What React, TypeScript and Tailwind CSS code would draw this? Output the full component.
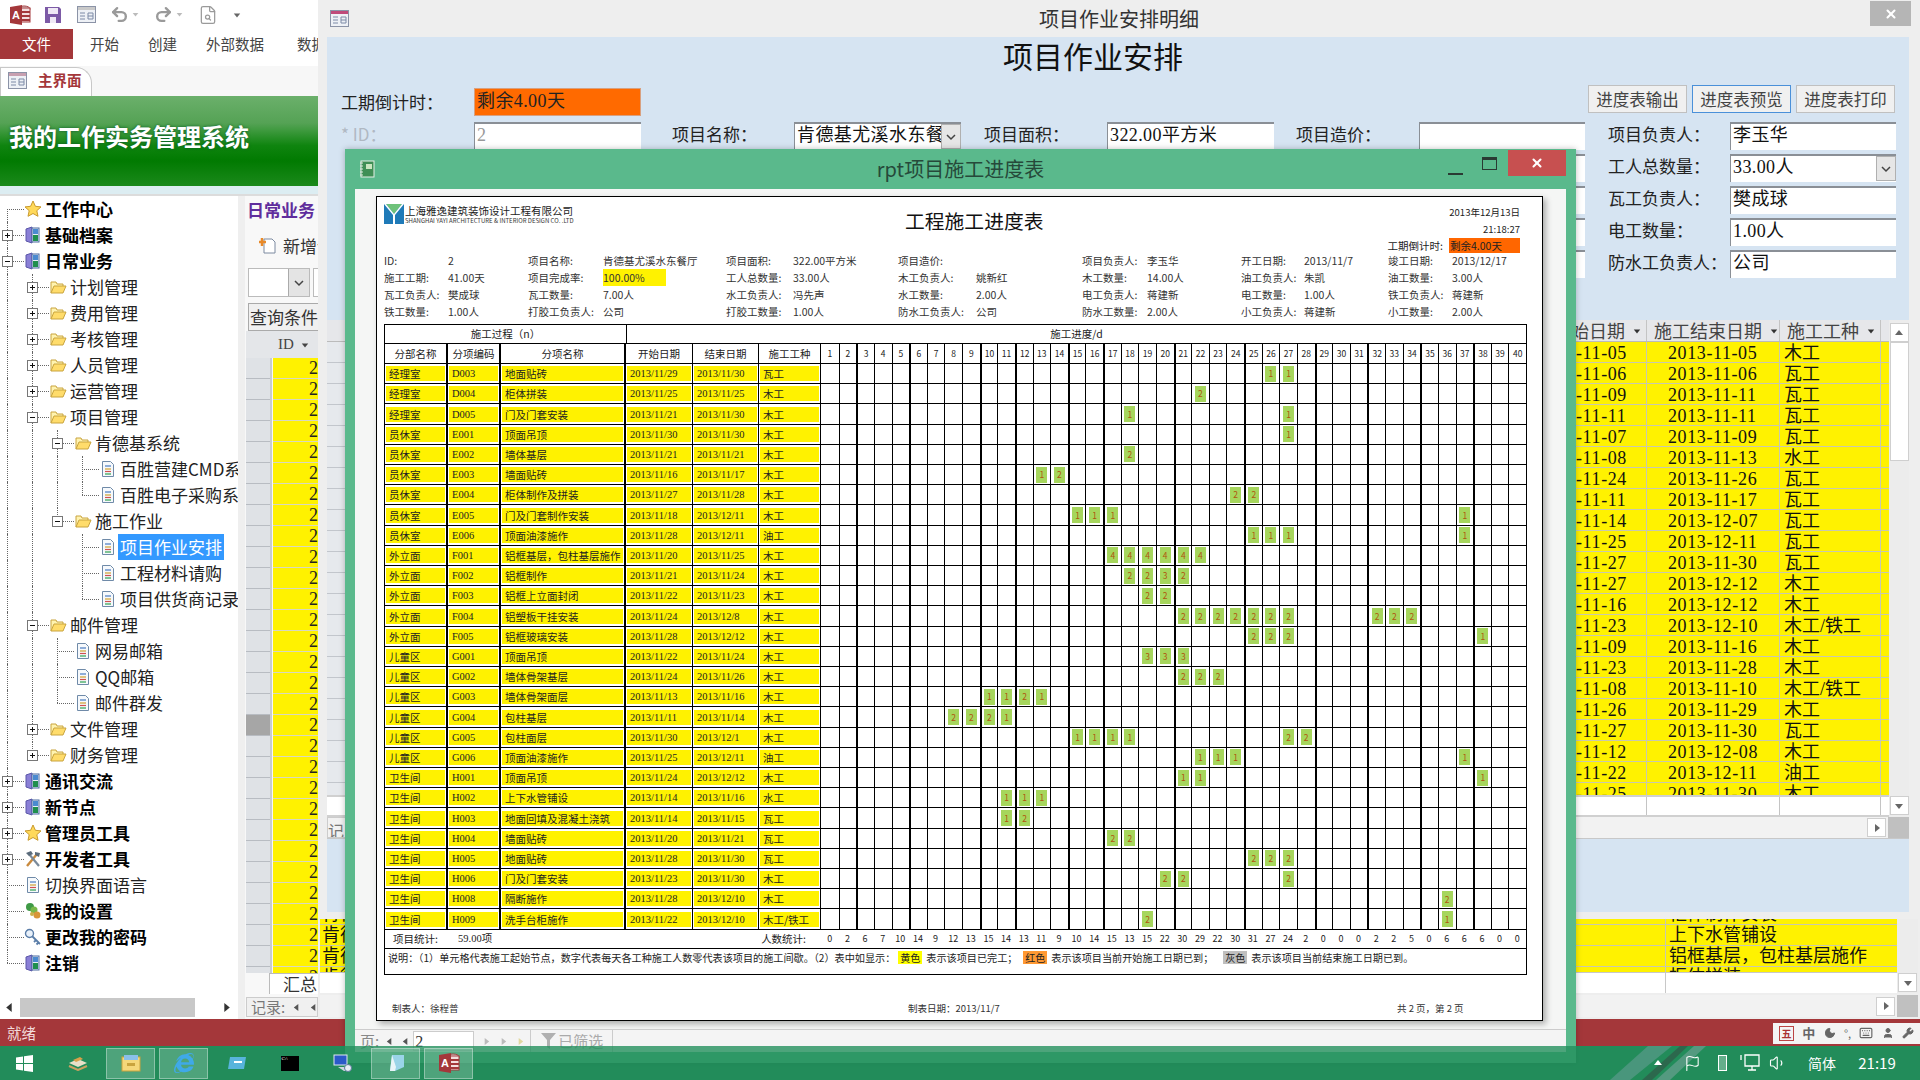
import React from 'react';
import { FileSearch, Flag, Keyboard, Moon, Redo2, Undo2, User, Volume1, Wrench, X } from 'lucide-react';
import { FaInternetExplorer } from 'react-icons/fa';

const SIM = "font-['Liberation_Serif','Noto_Sans_CJK_SC',serif]";
const YELLOW = 'bg-[#fff200]';

type TreeRow = [number, string, string, string, boolean?];

const treeRows: TreeRow[] = [
  [0, '工作中心', 'star', '', true],
  [0, '基础档案', 'book', '+', true],
  [0, '日常业务', 'book', '-', true],
  [1, '计划管理', 'folder', '+'],
  [1, '费用管理', 'folder', '+'],
  [1, '考核管理', 'folder', '+'],
  [1, '人员管理', 'folder', '+'],
  [1, '运营管理', 'folder', '+'],
  [1, '项目管理', 'folder', '-'],
  [2, '肯德基系统', 'folder', '-'],
  [3, '百胜营建CMD系统', 'doc', ''],
  [3, '百胜电子采购系统', 'doc', ''],
  [2, '施工作业', 'folder', '-'],
  [3, '项目作业安排', 'doc', ''],
  [3, '工程材料请购', 'doc', ''],
  [3, '项目供货商记录', 'doc', ''],
  [1, '邮件管理', 'folder', '-'],
  [2, '网易邮箱', 'doc', ''],
  [2, 'QQ邮箱', 'doc', ''],
  [2, '邮件群发', 'doc', ''],
  [1, '文件管理', 'folder', '+'],
  [1, '财务管理', 'folder', '+'],
  [0, '通讯交流', 'book', '+', true],
  [0, '新节点', 'book', '+', true],
  [0, '管理员工具', 'star', '+', true],
  [0, '开发者工具', 'tools', '+', true],
  [0, '切换界面语言', 'doc', ''],
  [0, '我的设置', 'gear', '', true],
  [0, '更改我的密码', 'key', '', true],
  [0, '注销', 'book', '', true],
];

function hasNext(i: number) {
  const lvl = treeRows[i][0];
  for (let j = i + 1; j < treeRows.length; j++) {
    if (treeRows[j][0] < lvl) return false;
    if (treeRows[j][0] === lvl) return true;
  }
  return false;
}

const scheduleRows: [string, string, string, string, string, string, Record<number, number>][] = [
  ['经理室', 'D003', '地面贴砖', '2013/11/29', '2013/11/30', '瓦工', { 26: 1, 27: 1 }],
  ['经理室', 'D004', '柜体拼装', '2013/11/25', '2013/11/25', '木工', { 22: 2 }],
  ['经理室', 'D005', '门及门套安装', '2013/11/21', '2013/11/30', '木工', { 18: 1, 27: 1 }],
  ['员休室', 'E001', '顶面吊顶', '2013/11/30', '2013/11/30', '木工', { 27: 1 }],
  ['员休室', 'E002', '墙体基层', '2013/11/21', '2013/11/21', '木工', { 18: 2 }],
  ['员休室', 'E003', '墙面贴砖', '2013/11/16', '2013/11/17', '木工', { 13: 1, 14: 2 }],
  ['员休室', 'E004', '柜体制作及拼装', '2013/11/27', '2013/11/28', '木工', { 24: 2, 25: 2 }],
  ['员休室', 'E005', '门及门套制作安装', '2013/11/18', '2013/12/11', '木工', { 15: 1, 16: 1, 17: 1, 37: 1 }],
  ['员休室', 'E006', '顶面油漆施作', '2013/11/28', '2013/12/11', '油工', { 25: 1, 26: 1, 27: 1, 37: 1 }],
  ['外立面', 'F001', '铝框基层，包柱基层施作', '2013/11/20', '2013/11/25', '木工', { 17: 4, 18: 4, 19: 4, 20: 4, 21: 4, 22: 4 }],
  ['外立面', 'F002', '铝框制作', '2013/11/21', '2013/11/24', '木工', { 18: 2, 19: 2, 20: 3, 21: 2 }],
  ['外立面', 'F003', '铝框上立面封闭', '2013/11/22', '2013/11/23', '木工', { 19: 2, 20: 2 }],
  ['外立面', 'F004', '铝塑板干挂安装', '2013/11/24', '2013/12/8', '木工', { 21: 2, 22: 2, 23: 2, 24: 2, 25: 2, 26: 2, 27: 2, 32: 2, 33: 2, 34: 2 }],
  ['外立面', 'F005', '铝框玻璃安装', '2013/11/28', '2013/12/12', '木工', { 25: 2, 26: 2, 27: 2, 38: 1 }],
  ['儿童区', 'G001', '顶面吊顶', '2013/11/22', '2013/11/24', '木工', { 19: 3, 20: 3, 21: 3 }],
  ['儿童区', 'G002', '墙体骨架基层', '2013/11/24', '2013/11/26', '木工', { 21: 2, 22: 2, 23: 2 }],
  ['儿童区', 'G003', '墙体骨架面层', '2013/11/13', '2013/11/16', '木工', { 10: 1, 11: 1, 12: 2, 13: 1 }],
  ['儿童区', 'G004', '包柱基层', '2013/11/11', '2013/11/14', '木工', { 8: 2, 9: 2, 10: 2, 11: 1 }],
  ['儿童区', 'G005', '包柱面层', '2013/11/30', '2013/12/1', '木工', { 15: 1, 16: 1, 17: 1, 18: 1, 27: 2, 28: 2 }],
  ['儿童区', 'G006', '顶面油漆施作', '2013/11/25', '2013/12/11', '油工', { 22: 1, 23: 1, 24: 1, 37: 1 }],
  ['卫生间', 'H001', '顶面吊顶', '2013/11/24', '2013/12/12', '木工', { 21: 1, 22: 1, 38: 1 }],
  ['卫生间', 'H002', '上下水管铺设', '2013/11/14', '2013/11/16', '水工', { 11: 1, 12: 1, 13: 1 }],
  ['卫生间', 'H003', '地面回填及混凝土浇筑', '2013/11/14', '2013/11/15', '瓦工', { 11: 1, 12: 2 }],
  ['卫生间', 'H004', '墙面贴砖', '2013/11/20', '2013/11/21', '瓦工', { 17: 2, 18: 2 }],
  ['卫生间', 'H005', '地面贴砖', '2013/11/28', '2013/11/30', '瓦工', { 25: 2, 26: 2, 27: 2 }],
  ['卫生间', 'H006', '门及门套安装', '2013/11/23', '2013/11/30', '木工', { 20: 2, 21: 2, 27: 2 }],
  ['卫生间', 'H008', '隔断施作', '2013/11/28', '2013/12/10', '木工', { 36: 2 }],
  ['卫生间', 'H009', '洗手台柜施作', '2013/11/22', '2013/12/10', '木工/铁工', { 19: 2, 36: 1 }],
];

const dayTotals = [0, 2, 6, 7, 10, 14, 9, 12, 13, 15, 14, 13, 11, 9, 10, 14, 15, 13, 15, 22, 30, 29, 22, 30, 31, 27, 24, 2, 0, 0, 0, 2, 2, 5, 0, 6, 6, 6, 0, 0];
const days = Array.from({ length: 40 }, (_, i) => i + 1);
const thickLines = [3, 6, 10, 12, 15, 17, 21, 25, 29, 32, 35, 38];

const infoRows = [
  ['ID:', '2', '项目名称:', '肯德基尤溪水东餐厅', '项目面积:', '322.00平方米', '项目造价:', '', '项目负责人:', '李玉华', '开工日期:', '2013/11/7', '竣工日期:', '2013/12/17'],
  ['施工工期:', '41.00天', '项目完成率:', '100.00%', '工人总数量:', '33.00人', '木工负责人:', '姚新红', '木工数量:', '14.00人', '油工负责人:', '朱凯', '油工数量:', '3.00人'],
  ['瓦工负责人:', '樊成球', '瓦工数量:', '7.00人', '水工负责人:', '冯先声', '水工数量:', '2.00人', '电工负责人:', '蒋建新', '电工数量:', '1.00人', '铁工负责人:', '蒋建新'],
  ['铁工数量:', '1.00人', '打胶工负责人:', '公司', '打胶工数量:', '1.00人', '防水工负责人:', '公司', '防水工数量:', '2.00人', '小工负责人:', '蒋建新', '小工数量:', '2.00人'],
];

const gridRows = [
  ['11-05', '2013-11-05', '木工'], ['11-06', '2013-11-06', '瓦工'], ['11-09', '2013-11-11', '瓦工'], ['11-11', '2013-11-11', '瓦工'],
  ['11-07', '2013-11-09', '瓦工'], ['11-08', '2013-11-13', '水工'], ['11-24', '2013-11-26', '瓦工'], ['11-11', '2013-11-17', '瓦工'],
  ['11-14', '2013-12-07', '瓦工'], ['11-25', '2013-12-11', '瓦工'], ['11-27', '2013-11-30', '瓦工'], ['11-27', '2013-12-12', '木工'],
  ['11-16', '2013-12-12', '木工'], ['11-23', '2013-12-10', '木工/铁工'], ['11-09', '2013-11-16', '木工'], ['11-23', '2013-11-28', '木工'],
  ['11-08', '2013-11-10', '木工/铁工'], ['11-26', '2013-11-29', '木工'], ['11-27', '2013-11-30', '瓦工'], ['11-12', '2013-12-08', '木工'],
  ['11-22', '2013-12-11', '油工'], ['11-25', '2013-11-30', '木工'],
];

function AccessLogo({ size = 22 }: { size?: number }) {
  return (
    <svg width={size} height={size} viewBox="0 0 22 22" className="shrink-0">
      <ellipse cx="15" cy="5" rx="6" ry="3" fill="#d9d9d9" stroke="#a4373a" />
      <rect x="9" y="4" width="12" height="14" fill="#f3dede" stroke="#a4373a" />
      <path d="M10 8h11M10 12h11M10 16h11" stroke="#a4373a" strokeWidth="2" />
      <path d="M1 3l12-2v20l-12-2z" fill="#a4373a" />
      <text x="3" y="15" fontSize="11" fontWeight="700" fill="#fff" fontFamily="Liberation Sans">A</text>
    </svg>
  );
}

function FormIcon({ top = '#c8a0b0' }: { top?: string }) {
  return (
    <svg width="19" height="19" viewBox="0 0 19 19" className="shrink-0">
      <rect x="0.5" y="1.5" width="18" height="16" fill="#eef1f6" stroke="#8b93a7" />
      <rect x="1" y="2" width="17" height="3" fill={top} />
      <path d="M3 8h5M3 11h5M3 14h5M11 8h5v6h-5zM11 11h5" stroke="#7d8aa6" fill="none" />
    </svg>
  );
}

function TreeIcon({ type }: { type: string }) {
  if (type === 'star') {
    return (
      <svg width="18" height="18" viewBox="0 0 18 18">
        <path d="M9 1l2.4 5.3 5.6.6-4.2 3.8 1.2 5.6L9 13.5l-5 2.8 1.2-5.6L1 6.9l5.6-.6z" fill="#ffd95a" stroke="#c99a2e" />
      </svg>
    );
  }
  if (type === 'book') {
    return (
      <svg width="18" height="18" viewBox="0 0 18 18">
        <path d="M2 3l6-2v16l-6-2z" fill="#8a7fd6" stroke="#5a56a8" />
        <rect x="8" y="2" width="7" height="14" fill="#e6edf5" stroke="#4a6aa0" />
        <rect x="9" y="9" width="5" height="6" fill="#1f8f4e" />
        <rect x="9" y="3" width="5" height="5" fill="#4a8ad0" />
      </svg>
    );
  }
  if (type === 'folder') {
    return (
      <svg width="18" height="18" viewBox="0 0 18 18">
        <path d="M2 15V4h5l1 2h6v2" fill="#fff3b0" stroke="#c9a43e" />
        <path d="M2 15l3-7h12l-3 7z" fill="#ffdc6b" stroke="#c9a43e" />
      </svg>
    );
  }
  if (type === 'doc') {
    return (
      <svg width="18" height="18" viewBox="0 0 18 18">
        <path d="M3.5 1.5h8l3 3v12h-11z" fill="#f6f9fc" stroke="#6f8aa8" />
        <path d="M6 6h6" stroke="#4a7ac0" strokeWidth="1.2" />
        <path d="M6 9h6" stroke="#d0a030" strokeWidth="1.2" />
        <path d="M6 11.5h6" stroke="#d05050" strokeWidth="1.2" />
        <path d="M6 14h6" stroke="#30a050" strokeWidth="1.2" />
      </svg>
    );
  }
  if (type === 'tools') {
    return (
      <svg width="18" height="18" viewBox="0 0 18 18">
        <path d="M3 16L13 4" stroke="#c98a3e" strokeWidth="2.4" />
        <path d="M15 16L5 4" stroke="#7a8a9a" strokeWidth="2.2" />
        <path d="M2 3l5-2 2 3-4 2zM11 2l5 1-1 4-4-2z" fill="#5b6b7b" />
      </svg>
    );
  }
  if (type === 'gear') {
    return (
      <svg width="18" height="18" viewBox="0 0 18 18">
        <circle cx="6" cy="5" r="4" fill="#3f9a46" />
        <circle cx="10" cy="8" r="3.5" fill="#79b84a" />
        <circle cx="13" cy="13" r="3.5" fill="#d8963a" />
        <circle cx="8" cy="12" r="2" fill="#c9b04a" />
      </svg>
    );
  }
  return (
    <svg width="18" height="18" viewBox="0 0 18 18">
      <circle cx="5.5" cy="5.5" r="4" fill="#e9f1fa" stroke="#5a7da8" strokeWidth="1.4" />
      <path d="M8 8l8 8M12 12l-2 2M14.500 14.500l-2 2" stroke="#5a7da8" strokeWidth="1.8" />
    </svg>
  );
}

function Expander({ sign }: { sign: string }) {
  return (
    <svg width="11" height="11" viewBox="0 0 11 11" className="absolute left-[2px] top-[8px]">
      <rect x="0.500" y="0.500" width="10" height="10" fill="#fff" stroke="#777" />
      <path d={sign === '+' ? 'M3 5.500h5M5.500 3v5' : 'M3 5.500h5'} stroke="#111" />
    </svg>
  );
}

function Tree() {
  const active: boolean[] = [];
  return (
    <div className="text-[17px] text-[#222]">
      {treeRows.map((row, i) => {
        const [lvl, label, icon, exp, bold] = row;
        const more = hasNext(i);
        active[lvl] = more;
        const guides = active.slice(0, lvl);
        return (
          <div key={label} className="flex h-[26px] items-center whitespace-nowrap">
            {guides.map((g, k) => (
              <div key={k} className="relative h-full w-[25px] shrink-0">
                {g && <div className="absolute inset-y-0 left-[7px] border-l border-dotted border-[#666]" />}
              </div>
            ))}
            <div className="relative h-full w-[24px] shrink-0">
              <div className={`absolute left-[7px] border-l border-dotted border-[#666] ${i === 0 ? 'top-1/2' : 'top-0'} ${more ? 'bottom-0' : 'bottom-1/2'}`} />
              <div className="absolute left-[7px] right-0 top-1/2 border-t border-dotted border-[#666]" />
              {exp && <Expander sign={exp} />}
            </div>
            <div className="w-[18px] shrink-0">
              <TreeIcon type={icon} />
            </div>
            <span className={`ml-[1px] px-[2px] leading-[26px] ${bold ? 'font-bold text-black' : ''} ${label === '项目作业安排' ? 'bg-[#3399ff] text-white' : ''}`}>
              {label}
            </span>
          </div>
        );
      })}
    </div>
  );
}

function Tri({ dir, className = '' }: { dir: 'l' | 'r' | 'u' | 'd'; className?: string }) {
  const d = { l: 'M7 1v8L2 5z', r: 'M3 1v8l5-4z', u: 'M1 7h8L5 2z', d: 'M1 3h8L5 8z' }[dir];
  return (
    <svg width="10" height="10" viewBox="0 0 10 10" className={`shrink-0 ${className}`}>
      <path d={d} fill="currentColor" />
    </svg>
  );
}

function Chevron() {
  return (
    <svg width="10" height="10" viewBox="0 0 10 10">
      <path d="M1 3l4 4 4-4" fill="none" stroke="currentColor" strokeWidth="1.500" />
    </svg>
  );
}

function LeftPane() {
  const rows = Array.from({ length: 30 }, (_, i) => i);
  return (
    <div className="flex w-[318px] shrink-0 flex-col bg-white">
      <div className="flex h-[29px] items-center pl-[9px] text-[#9a9a9a]">
        <AccessLogo />
        <svg width="18" height="18" viewBox="0 0 18 18" className="ml-[13px]">
          <path d="M1 1h14l2 2v14H1z" fill="#7c5aa6" />
          <rect x="4" y="2" width="10" height="6" fill="#efe9f5" />
          <rect x="6" y="11" width="6" height="6" fill="#efe9f5" />
        </svg>
        <div className="ml-[15px]"><FormIcon top="#c9c9c9" /></div>
        <Undo2 className="ml-[14px] h-[19px] w-[19px]" strokeWidth={3} />
        <Tri dir="d" className="ml-[3px] h-[7px] w-[7px] text-[#bbb]" />
        <Redo2 className="ml-[15px] h-[19px] w-[19px]" strokeWidth={3} />
        <Tri dir="d" className="ml-[3px] h-[7px] w-[7px] text-[#bbb]" />
        <FileSearch className="ml-[15px] h-[20px] w-[20px]" strokeWidth={1.5} />
        <Tri dir="d" className="ml-[15px] h-[8px] w-[8px] text-[#666]" />
      </div>
      <div className="flex h-[30px] items-center overflow-hidden whitespace-nowrap text-[14.500px] text-[#444]">
        <div className="flex h-full w-[73px] shrink-0 items-center justify-center bg-[#a4373a] text-white">文件</div>
        <span className="ml-[17px]">开始</span>
        <span className="ml-[29px]">创建</span>
        <span className="ml-[29px]">外部数据</span>
        <span className="ml-[33px]">数据库工具</span>
      </div>
      <div className="h-[7px]" />
      <div className="flex h-[30px] items-end bg-[#f7f7f7]">
        <div className="flex h-[29px] w-[92px] items-center rounded-tr-[16px] border border-b-0 border-[#c8c8c8] bg-white pb-[4px] pl-[7px]">
          <FormIcon />
          <span className="ml-[11px] text-[14.500px] font-bold text-[#a4373a]">主界面</span>
        </div>
      </div>
      <div className="flex h-[90px] items-center bg-[linear-gradient(to_bottom,#6bb06b_0%,#55a255_30%,#3f9a3f_38%,#0f840f_55%,#017a01_72%,#1b891b_100%)] pb-[10px] pl-[9px]">
        <span className="text-[24px] font-bold leading-none text-white [text-shadow:0_0_3px_#0b5a2a]">我的工作实务管理系统</span>
      </div>
      <div className="h-[10px] border-b-2 border-[#dcdcdc] bg-[#dcedf2]" />
      <div className="flex min-h-0 flex-1">
        <div className="flex w-[238px] shrink-0 flex-col justify-between overflow-hidden">
          <Tree />
          <div className="mb-[2px] flex h-[19px] items-center text-[#333]">
            <Tri dir="l" className="ml-[4px] h-[11px] w-[11px]" />
            <div className="ml-[5px] h-full w-[175px] bg-[#c8c8c8]" />
            <Tri dir="r" className="ml-[26px] h-[11px] w-[11px]" />
          </div>
        </div>
        <div className="flex min-w-0 flex-1 flex-col overflow-hidden whitespace-nowrap border-l-[7px] border-[#efefef] bg-[#f8f8f8]">
          <div className="flex h-[27px] shrink-0 items-center pl-[2px] text-[17px] font-bold text-[#5f2d9c]">日常业务</div>
          <div className="flex h-[45px] shrink-0 items-center pl-[14px] text-[17px] text-[#333]">
            <svg width="17" height="17" viewBox="0 0 17 17" className="shrink-0">
              <path d="M5 2h8l3 3v11H5z" fill="#fff" stroke="#7c8aa0" />
              <path d="M3 1v8M0 5h7" stroke="#e88a2a" strokeWidth="2.500" />
            </svg>
            <span className="ml-[7px]">新增记录</span>
          </div>
          <div className="flex h-[29px] shrink-0">
            <div className="ml-[3px] flex w-[62px] shrink-0 justify-end border border-[#bbb] bg-white">
              <div className="flex w-[21px] items-center justify-center border-l border-[#aaa] bg-[#e4e4e4] text-[#444]"><Chevron /></div>
            </div>
            <div className="ml-[3px] w-[20px] shrink-0 border border-[#bbb] bg-white" />
          </div>
          <div className="ml-[3px] mt-[6px] h-[28px] w-[80px] shrink-0 border border-[#aaa] bg-[#f0f0f0] pl-[1px] text-[17px] leading-[26px] text-[#333]">查询条件</div>
          <div className="ml-[1px] flex h-[27px] shrink-0 items-center bg-[#e4e6e9] pl-[32px] text-[15px] text-[#444]">
            <span className={SIM}>ID</span>
            <Tri dir="d" className="ml-[7px] h-[8px] w-[8px]" />
          </div>
          <div className="ml-[1px] h-[615px] shrink-0 overflow-hidden">
            {rows.map((i) => (
              <div key={i} className="flex h-[21px]">
                <div className={`w-[24px] shrink-0 border-b border-[#b8bcc2] ${i === 17 ? 'bg-[#a6a6a6]' : 'bg-[#dfe2e6]'}`} />
                <div className="w-[2px] shrink-0 bg-[#c8ccd0]" />
                <div className={`ml-[1px] flex-1 border-b border-[#d8d8c0] text-right text-[18px] leading-[20px] text-[#222] ${SIM} ${YELLOW}`}>2</div>
              </div>
            ))}
          </div>
          <div className="ml-[24px] h-[21px] shrink-0 border-l border-t border-[#bbb] bg-white text-[17px] leading-[20px] text-[#333]">
            <span className="ml-[13px]">汇总</span>
          </div>
          <div className="ml-[1px] mt-[3px] flex h-[20px] shrink-0 items-center border border-[#ccc] bg-[#f0f0f0] pl-[4px] text-[15px] text-[#777]">
            记录:
            <Tri dir="l" className="ml-[7px] h-[9px] w-[9px] text-[#555]" />
            <Tri dir="l" className="ml-[8px] h-[9px] w-[9px] text-[#555]" />
            <span className="ml-[1px] bg-white text-[#333]">第</span>
          </div>
        </div>
      </div>
    </div>
  );
}

function Label({ text, col, gray }: { text: string; col: string; gray?: boolean }) {
  return (
    <div className={`flex h-[32px] items-center whitespace-nowrap pb-[7px] text-[17px] ${gray ? 'text-[#b0b8c2]' : 'text-[#222]'} ${col}`}>{text}</div>
  );
}

function Field({ value, combo, gray, col = '' }: { value?: string; combo?: boolean; gray?: boolean; col?: string }) {
  return (
    <div className={`relative mb-[3px] mt-[1px] flex h-[28px] items-center overflow-hidden whitespace-nowrap border-l border-t-2 border-[#8a8f96] bg-white pb-[4px] pl-[2px] text-[18px] leading-none tracking-[0.4px] ${SIM} ${gray ? 'bg-[#eef2f7] text-[#999]' : 'text-[#111]'} ${col}`}>
      {value}
      {combo && (
        <div className="absolute bottom-[1px] right-0 top-0 flex w-[20px] items-center justify-center border border-[#b0b0b0] bg-[#e6e6e6] text-[#444]">
          <Chevron />
        </div>
      )}
    </div>
  );
}

function HeaderCell({ text, width, right }: { text: string; width: string; right?: boolean }) {
  return (
    <div className={`flex h-full shrink-0 items-center overflow-hidden whitespace-nowrap border-r border-[#c4c4c4] text-[#444] ${right ? 'justify-end' : 'pl-[7px]'} ${width}`}>
      <span>{text}</span>
      <Tri dir="d" className="ml-[8px] mr-[5px] h-[8px] w-[8px] text-[#333]" />
    </div>
  );
}

function ScrollBtn({ dir, className = '' }: { dir: 'u' | 'd' | 'r'; className?: string }) {
  return (
    <div className={`flex h-[19px] w-[19px] shrink-0 items-center justify-center border border-[#cfcfcf] bg-white text-[#666] ${className}`}>
      <Tri dir={dir} />
    </div>
  );
}

function RightPane() {
  return (
    <div className="flex min-w-0 flex-1 flex-col bg-[#eeeeee]">
      <div className="relative flex h-[37px] shrink-0 items-center justify-center text-[20px] text-[#333]">
        <div className="absolute left-[12px] top-[9px]"><FormIcon top="#c04a7a" /></div>
        项目作业安排明细
        <div className="absolute right-[9px] top-[1px] flex h-[25px] w-[41px] items-center justify-center bg-[#b5b5b5] text-white">
          <X className="h-[14px] w-[14px]" strokeWidth={3.500} />
        </div>
      </div>
      <div className="ml-[9px] mr-[11px] flex h-[875px] shrink-0 flex-col bg-[#d6e4f2]">
        <div className="flex h-[52px] items-center justify-center pb-[17px] pr-[50px] text-[30px] font-normal leading-none text-[#111]">项目作业安排</div>
        <div className="flex h-[32px] pl-[14px]">
          <Label text="工期倒计时：" col="w-[133px]" />
          <div className={`mt-[-1px] flex h-[28px] w-[167px] items-center border border-[#d8a080] bg-[#ff6a00] pb-[2px] pl-[2px] text-[18px] tracking-[0.4px] text-[#222] ${SIM}`}>剩余4.00天</div>
          <div className="ml-auto mr-[14px] flex gap-[5px] text-[16.500px] text-[#444]">
            <button className="mt-[-4px] h-[28px] w-[99px] border border-[#c0c0c0] bg-[#f0f0f0]">进度表输出</button>
            <button className="mt-[-4px] h-[28px] w-[99px] border border-[#4a90d9] bg-[#f0f0f0]">进度表预览</button>
            <button className="mt-[-4px] h-[28px] w-[99px] border border-[#c0c0c0] bg-[#f0f0f0]">进度表打印</button>
          </div>
        </div>
        <div className="grid grid-cols-[133px_167px_153px_167px_146px_167px_145px_166px_145px_166px] pl-[14px]">
          <Label text="* ID：" col="" gray />
          <Field value="2" gray />
          <Label text="项目名称：" col="pl-[31px]" />
          <Field value="肯德基尤溪水东餐厅" combo />
          <Label text="项目面积：" col="pl-[23px]" />
          <Field value="322.00平方米" />
          <Label text="项目造价：" col="pl-[22px]" />
          <Field />
          <Label text="项目负责人：" col="pl-[23px]" />
          <Field value="李玉华" />
          <Field col="col-start-8" />
          <Label text="工人总数量：" col="pl-[23px]" />
          <Field value="33.00人" combo />
          <Field col="col-start-8" />
          <Label text="瓦工负责人：" col="pl-[23px]" />
          <Field value="樊成球" />
          <Field col="col-start-8" />
          <Label text="电工数量：" col="pl-[23px]" />
          <Field value="1.00人" />
          <Field col="col-start-8" />
          <Label text="防水工负责人：" col="pl-[23px]" />
          <Field value="公司" />
        </div>
        <div className="mt-[39px] flex h-[497px] shrink-0 bg-white">
          <div className="flex min-w-0 flex-1 flex-col">
            <div className="flex h-[22px] shrink-0 items-center border-b border-[#bbb] bg-[#e6e7ea] text-[18px]">
              <div className="h-full flex-1" />
              <HeaderCell text="施工开始日期" width="w-[71px]" right />
              <HeaderCell text="施工结束日期" width="w-[133px]" />
              <HeaderCell text="施工工种" width="w-[101px]" />
              <div className="w-[8px]" />
            </div>
            <div className={`h-[453px] overflow-hidden text-[18px] text-[#111] ${SIM}`}>
              {gridRows.map((r, i) => (
                <div key={i} className="flex h-[21px] leading-[23px]">
                  <div className="flex-1 border-b border-[#c2c6cc] bg-[#e6e9ed]" />
                  <div className={`w-[71px] overflow-hidden whitespace-nowrap border-b border-r border-[#c8c8b0] pr-[21px] text-right tracking-[0.6px] ${YELLOW}`}>-{r[0]}</div>
                  <div className={`w-[133px] border-b border-r border-[#c8c8b0] pl-[21px] tracking-[0.6px] ${YELLOW}`}>{r[1]}</div>
                  <div className={`w-[101px] whitespace-nowrap border-b border-r border-[#c8c8b0] pl-[4px] ${YELLOW}`}>{r[2]}</div>
                  <div className={`w-[8px] border-b border-[#c8c8b0] ${YELLOW}`} />
                </div>
              ))}
            </div>
            <div className="flex flex-1 border-b-2 border-t-2 border-[#d0d0d0]">
              <div className="flex-1" />
              <div className="w-[71px] border-r border-[#c4c4c4]" />
              <div className="w-[133px] border-r border-[#c4c4c4]" />
              <div className="w-[101px] border-r border-[#c4c4c4]" />
              <div className="w-[8px]" />
            </div>
          </div>
          <div className="flex w-[20px] shrink-0 flex-col items-center bg-[#ececec] pb-[2px] pt-[3px]">
            <ScrollBtn dir="u" />
            <div className="h-[119px] w-[19px] border border-[#cfcfcf] bg-white" />
            <ScrollBtn dir="d" className="mt-auto" />
          </div>
        </div>
        <div className="flex h-[22px] shrink-0 items-center border-b border-[#c8c8c8] bg-[#f2f2f2]">
          <div className="h-full w-[20px] overflow-hidden border border-[#ccc] text-[16px] text-[#777]">记录</div>
          <ScrollBtn dir="r" className="ml-auto" />
          <div className="ml-[2px] h-full w-[21px] bg-[#c0c0c0]" />
        </div>
      </div>
      <div className="mx-[2px] flex min-h-0 flex-1 flex-col pt-[7px]">
        <div className="flex h-[74px] shrink-0 bg-white">
          <div className="flex min-w-0 flex-1 flex-col">
            <div className={`h-[53px] overflow-hidden text-[18px] text-[#111] ${SIM}`}>
              <div className="-mt-[15px]">
                {['柜体制作安装', '上下水管铺设', '铝框基层，包柱基层施作', '柜体拼装'].map((t) => (
                  <div key={t} className="flex h-[21px] leading-[21px]">
                    <div className={`flex-1 border-b border-r border-[#c8c8b0] pl-[2px] ${YELLOW}`}>肯德基尤溪水东餐厅</div>
                    <div className={`w-[231px] border-b border-[#c8c8b0] pl-[3px] ${YELLOW}`}>{t}</div>
                  </div>
                ))}
              </div>
            </div>
            <div className="flex flex-1 border-t border-[#c8c8c8]">
              <div className="flex-1 border-r border-[#c8c8c8]" />
              <div className="w-[231px]" />
            </div>
          </div>
          <div className="flex w-[21px] shrink-0 flex-col items-center justify-end bg-[#ececec] pb-[1px]">
            <ScrollBtn dir="d" />
          </div>
        </div>
        <div className="mt-[2px] flex h-[22px] shrink-0 items-center bg-[#f2f2f2]">
          <ScrollBtn dir="r" className="ml-auto" />
          <div className="ml-[2px] h-full w-[21px] bg-[#c0c0c0]" />
        </div>
      </div>
    </div>
  );
}

function ReportInfo() {
  return (
    <div className="grid h-[68px] grid-cols-[64px_80px_75px_123px_67px_105px_78px_106px_65px_94px_63px_84px_64px_69px] text-[10.500px] leading-[17px] text-[#333]">
      {infoRows.flatMap((row, r) =>
        row.map((t, c) => (
          <div key={`${r}-${c}`} className="h-[17px] whitespace-nowrap">
            <span className={t === '100.00%' ? `block w-[63px] ${YELLOW}` : ''}>{t}</span>
          </div>
        )),
      )}
    </div>
  );
}

function ScheduleTable() {
  const cols = 'grid grid-cols-[63px_53px_125px_67px_66px_62px_repeat(40,minmax(0,1fr))]';
  return (
    <div className="w-[1143px] border border-black text-[10.500px] text-[#222]">
      <div className="grid h-[19px] grid-cols-[242px_1fr] items-center border-b border-black text-center">
        <div className="flex h-full items-center justify-center border-r border-black">施工过程（n）</div>
        <div>施工进度/d</div>
      </div>
      <div className={`${cols} h-[20px] border-b border-black text-center leading-[19px]`}>
        {['分部名称', '分项编码', '分项名称', '开始日期', '结束日期', '施工工种'].map((h, i) => (
          <div key={h} className={i < 3 ? 'border-r-2 border-black' : 'border-r border-black'}>{h}</div>
        ))}
        {days.map((d) => (
          <div key={d} className={`text-[8.500px] ${d > 1 ? (thickLines.includes(d) ? 'border-l-2 border-black' : 'border-l border-black') : ''}`}>{d}</div>
        ))}
      </div>
      {scheduleRows.map((row) => (
        <div key={row[1]} className={`${cols} h-[20.210px] border-b border-black`}>
          {row.slice(0, 6).map((t, i) => (
            <div key={i} className={`flex items-center ${i < 3 ? 'border-r-2 border-black' : 'border-r border-black'}`}>
              <div className={`mx-[1px] my-[2px] h-[15px] w-full overflow-hidden whitespace-nowrap pl-[3px] leading-[15px] ${i === 1 || i === 3 || i === 4 ? SIM : ''} ${YELLOW}`}>
                {t as string}
              </div>
            </div>
          ))}
          {days.map((d) => (
            <div key={d} className={`flex items-center justify-center ${d > 1 ? (thickLines.includes(d) ? 'border-l-2 border-black' : 'border-l border-black') : ''}`}>
              {row[6][d] && (
                <div className="flex h-[16px] w-[11px] items-center justify-center bg-[#a6d65c] text-[8.500px] text-[#b0560e]">{row[6][d]}</div>
              )}
            </div>
          ))}
        </div>
      ))}
      <div className={`${cols} h-[19px] items-center border-b border-black leading-[18px]`}>
        <div className="col-span-6 flex pl-[8px]">
          <span className="w-[65px]">项目统计:</span>
          <span className={SIM}>59.00项</span>
          <span className="ml-[269px]">人数统计:</span>
        </div>
        {dayTotals.map((n, i) => (
          <div key={i} className="text-center text-[9px]">{n}</div>
        ))}
      </div>
      <div className="flex h-[25px] items-start whitespace-nowrap pl-[3px] pt-[2px] text-[10.150px] leading-[13px]">
        <span>说明：（1）单元格代表施工起始节点，数字代表每天各工种施工人数零代表该项目的施工间歇。（2）表中如显示：</span>
        <span className="ml-[3px] w-[24px] bg-[#ffff00] text-center">黄色</span>
        <span className="ml-[4px] w-[97px]">表示该项目已完工；</span>
        <span className="w-[24px] bg-[#ff9933] text-center">红色</span>
        <span className="ml-[4px] w-[172px]">表示该项目当前开始施工日期已到；</span>
        <span className="w-[24px] bg-[#bfbfbf] text-center">灰色</span>
        <span className="ml-[4px]">表示该项目当前结束施工日期已到。</span>
      </div>
    </div>
  );
}

function ReportWindow() {
  return (
    <div className="absolute left-[345px] top-[149px] z-10 flex h-[914px] w-[1231px] flex-col bg-[#5ab98c] shadow-[0_0_6px_rgba(0,0,0,0.25)]">
      <div className="relative flex h-[40px] shrink-0 items-center justify-center text-[20px] text-[#26493a]">
        <svg width="16" height="18" viewBox="0 0 16 18" className="absolute left-[14px] top-[11px]">
          <rect x="2" y="1" width="13" height="16" fill="#3f8f55" stroke="#e6efe6" />
          <path d="M1 3h3M1 6h3M1 9h3M1 12h3M1 15h3" stroke="#dfe8df" />
          <rect x="7" y="4" width="6" height="5" fill="#c9e6c0" />
        </svg>
        rpt项目施工进度表
        <div className="absolute left-[1103px] top-[24px] h-[2px] w-[15px] bg-[#2a3a33]" />
        <div className="absolute left-[1137px] top-[8px] h-[13px] w-[15px] border border-t-[3px] border-[#2a3a33]" />
        <div className="absolute left-[1163px] top-[1px] flex h-[26px] w-[58px] items-center justify-center bg-[#c75050] text-white">
          <X className="h-[14px] w-[14px]" strokeWidth={3.500} />
        </div>
      </div>
      <div className="mx-[10px] mb-[11px] flex min-h-0 flex-1 flex-col bg-[#f5f6f5] pl-[21px] pt-[7px]">
        <div className="h-[825px] w-[1167px] shrink-0 border border-black bg-white pl-[7px] shadow-[3px_3px_6px_rgba(0,0,0,0.3)]">
          <div className="flex h-[55px]">
            <div className="flex w-[521px] shrink-0 pt-[7px]">
              <svg width="20" height="20" viewBox="0 0 20 20" className="shrink-0">
                <rect width="20" height="20" fill="#1f7ab8" />
                <path d="M2 0l8 10 8-10z" fill="#6ec27a" />
                <path d="M0 0h2l8 10v10H9V11z" fill="#fff" />
                <path d="M20 0h-2l-8 10v10h1V11z" fill="#fff" />
              </svg>
              <div className="ml-[1px] whitespace-nowrap">
                <div className="text-[10.500px] leading-[13px] text-[#222]">上海雅逸建筑装饰设计工程有限公司</div>
                <div className="text-[6px] leading-[7px] text-[#333]">SHANGHAI YAYI ARCHITECTURE &amp; INTERIOR DESIGN CO. .LTD</div>
              </div>
            </div>
            <div className="w-[139px] shrink-0 whitespace-nowrap pt-[10px] text-[19.800px] leading-[28px] text-[#111]">工程施工进度表</div>
            <div className="flex flex-1 flex-col items-end whitespace-nowrap pr-[22px] pt-[7px] text-[9.500px] leading-[17px] text-[#222]">
              <div>2013年12月13日</div>
              <div>21:18:27</div>
              <div className="flex items-center leading-[15px]">
                <span className="mr-[6px] text-[10.500px]">工期倒计时:</span>
                <span className="h-[15px] w-[71px] bg-[#ff6600] pl-[1px] text-[10.500px]">剩余4.00天</span>
              </div>
            </div>
          </div>
          <ReportInfo />
          <div className="mt-[4px]"><ScheduleTable /></div>
          <div className="mt-[26px] flex whitespace-nowrap pl-[8px] text-[9.500px] text-[#333]">
            <span className="w-[516px]">制表人：徐程普</span>
            <span className="w-[489px]">制表日期：2013/11/7</span>
            <span>共 2 页，第 2 页</span>
          </div>
        </div>
        <div className="-ml-[21px] mt-[8px] flex h-[23px] shrink-0 items-center border-t border-[#ccc] bg-[#f4f4f4] pl-[5px] text-[15px] text-[#888]">
          页:
          <Tri dir="l" className="ml-[6px] h-[9px] w-[9px] text-[#555]" />
          <Tri dir="l" className="ml-[7px] h-[9px] w-[9px] text-[#555]" />
          <div className={`ml-[3px] h-[20px] w-[61px] border border-[#ccc] bg-white pl-[1px] text-[16px] leading-[19px] text-[#333] ${SIM}`}>2</div>
          <Tri dir="r" className="ml-[8px] h-[9px] w-[9px] text-[#bbb]" />
          <Tri dir="r" className="ml-[8px] h-[9px] w-[9px] text-[#bbb]" />
          <Tri dir="r" className="ml-[8px] h-[9px] w-[9px] text-[#e0d8a0]" />
          <div className="ml-[5px] flex h-full items-center border-x border-[#ccc] px-[9px] text-[#aaa]">
            <svg width="17" height="18" viewBox="0 0 17 18"><path d="M1 1h15l-6 7v9l-3-2V8z" fill="#b0b0b0" /></svg>
            <span className="ml-[1px] text-[15px]">已筛选</span>
          </div>
        </div>
      </div>
    </div>
  );
}

function TaskSlot({ active, children }: { active?: boolean; children: React.ReactNode }) {
  return (
    <div className={`flex h-[31px] w-[49px] shrink-0 items-center justify-center ${active ? 'border border-white/35 bg-white/20' : ''}`}>{children}</div>
  );
}

function Taskbar() {
  return (
    <div className="relative z-20 flex h-[34px] shrink-0 items-center gap-[4px] overflow-hidden bg-[#23905c]/80">
      <svg className="pointer-events-none absolute inset-y-0 left-[1600px]" width="120" height="34" viewBox="0 0 120 34">
        <path d="M10 34L48 0h24L30 34z" fill="#5a9a8a" opacity="0.7" />
        <path d="M42 34L80 0h8L52 34z" fill="#2f5f4a" opacity="0.8" />
        <path d="M56 34L94 0h12L70 34z" fill="#6aa090" opacity="0.7" />
      </svg>
      <TaskSlot>
        <svg width="17" height="17" viewBox="0 0 17 17"><path d="M0 2.500l7-1V8H0zM8 1.300L17 0v8H8zM0 9h7v6.500l-7-1zM8 9h9v8l-9-1.300z" fill="#fff" /></svg>
      </TaskSlot>
      <TaskSlot>
        <svg width="20" height="16" viewBox="0 0 20 16"><path d="M1 8l9-4 9 4-9 4z" fill="#e8e0c8" /><path d="M1 11l9 4 9-4" fill="none" stroke="#c9a060" strokeWidth="2" /><path d="M5 5l7-3 3 2-7 3z" fill="#d9a04a" /></svg>
      </TaskSlot>
      <TaskSlot active>
        <svg width="20" height="18" viewBox="0 0 20 18"><rect x="1" y="3" width="18" height="14" fill="#f5d87a" stroke="#c9a43e" /><rect x="3" y="1" width="14" height="5" fill="#8ac0e8" /><rect x="6" y="9" width="8" height="3" fill="#c9a43e" /></svg>
      </TaskSlot>
      <TaskSlot active><FaInternetExplorer className="h-[20px] w-[20px] text-[#3fa9e8]" /></TaskSlot>
      <TaskSlot>
        <svg width="20" height="14" viewBox="0 0 20 14"><path d="M3 1h16l-2 12H1z" fill="#58b4dc" /><path d="M7 5h8v2H7z" fill="#fff" /></svg>
      </TaskSlot>
      <TaskSlot>
        <div className={`h-[15px] w-[18px] bg-black pl-[1px] text-[5px] leading-[6px] text-white ${SIM}`}>C:\</div>
      </TaskSlot>
      <TaskSlot>
        <svg width="20" height="20" viewBox="0 0 20 20"><rect x="1" y="2" width="13" height="10" fill="#2a5ac8" stroke="#dfe6f0" /><path d="M5 14l6 4h6l-6-4z" fill="#cfd6e0" /><circle cx="15" cy="15" r="3.500" fill="#e8eef5" stroke="#5a7a9a" /></svg>
      </TaskSlot>
      <TaskSlot active>
        <svg width="18" height="20" viewBox="0 0 18 20"><path d="M5 2h12v12L8 18H3z" fill="#9ad4e8" /><path d="M5 2L3 18h5l1-4z" fill="#e8f4f8" /></svg>
      </TaskSlot>
      <TaskSlot active><AccessLogo /></TaskSlot>
      <div className="relative ml-auto flex h-full items-center pr-[19px] text-white">
        <div className="flex w-[34px] justify-center"><Tri dir="u" /></div>
        <div className="flex w-[34px] justify-center"><Flag className="h-[17px] w-[17px]" strokeWidth={1.500} /></div>
        <div className="flex w-[26px] justify-center">
          <div className="h-[16px] w-[9px] border border-white bg-white/30" />
        </div>
        <div className="flex w-[30px] justify-center">
          <svg width="20" height="18" viewBox="0 0 20 18"><path d="M5 1h14v11H5zM12 12v4M8 16h8M1 1v5" fill="none" stroke="#fff" strokeWidth="1.300" /></svg>
        </div>
        <div className="flex w-[26px] justify-center"><Volume1 className="h-[18px] w-[18px]" strokeWidth={1.500} /></div>
        <div className="w-[62px] text-center text-[14px]">简体</div>
        <div className="w-[48px] text-center text-[15px]">21:19</div>
      </div>
    </div>
  );
}

export default function App() {
  return (
    <div className="relative flex h-[1080px] w-[1920px] flex-col overflow-hidden bg-[#1f7f52] font-['Noto_Sans_CJK_SC',sans-serif]">
      <div className="flex h-[1019px] shrink-0">
        <LeftPane />
        <RightPane />
      </div>
      <div className="flex h-[27px] shrink-0 items-center justify-between bg-[#a4373a] pl-[7px] text-[14.500px] text-[#f2dcdc]">
        就绪
        <div className="mt-[1px] flex h-[21px] w-[147px] items-center justify-between bg-[#f4f4f4] px-[6px] text-[#666]">
          <span className="flex h-[15px] w-[15px] items-center justify-center border border-[#b44] text-[10px] font-bold text-[#a33]">五</span>
          <span className="text-[13px] font-bold">中</span>
          <Moon className="h-[12px] w-[12px]" fill="currentColor" />
          <span className="text-[11px] leading-none">°,</span>
          <Keyboard className="h-[14px] w-[14px]" />
          <User className="h-[12px] w-[12px]" fill="currentColor" />
          <Wrench className="h-[12px] w-[12px]" fill="currentColor" />
        </div>
      </div>
      <Taskbar />
      <ReportWindow />
    </div>
  );
}
